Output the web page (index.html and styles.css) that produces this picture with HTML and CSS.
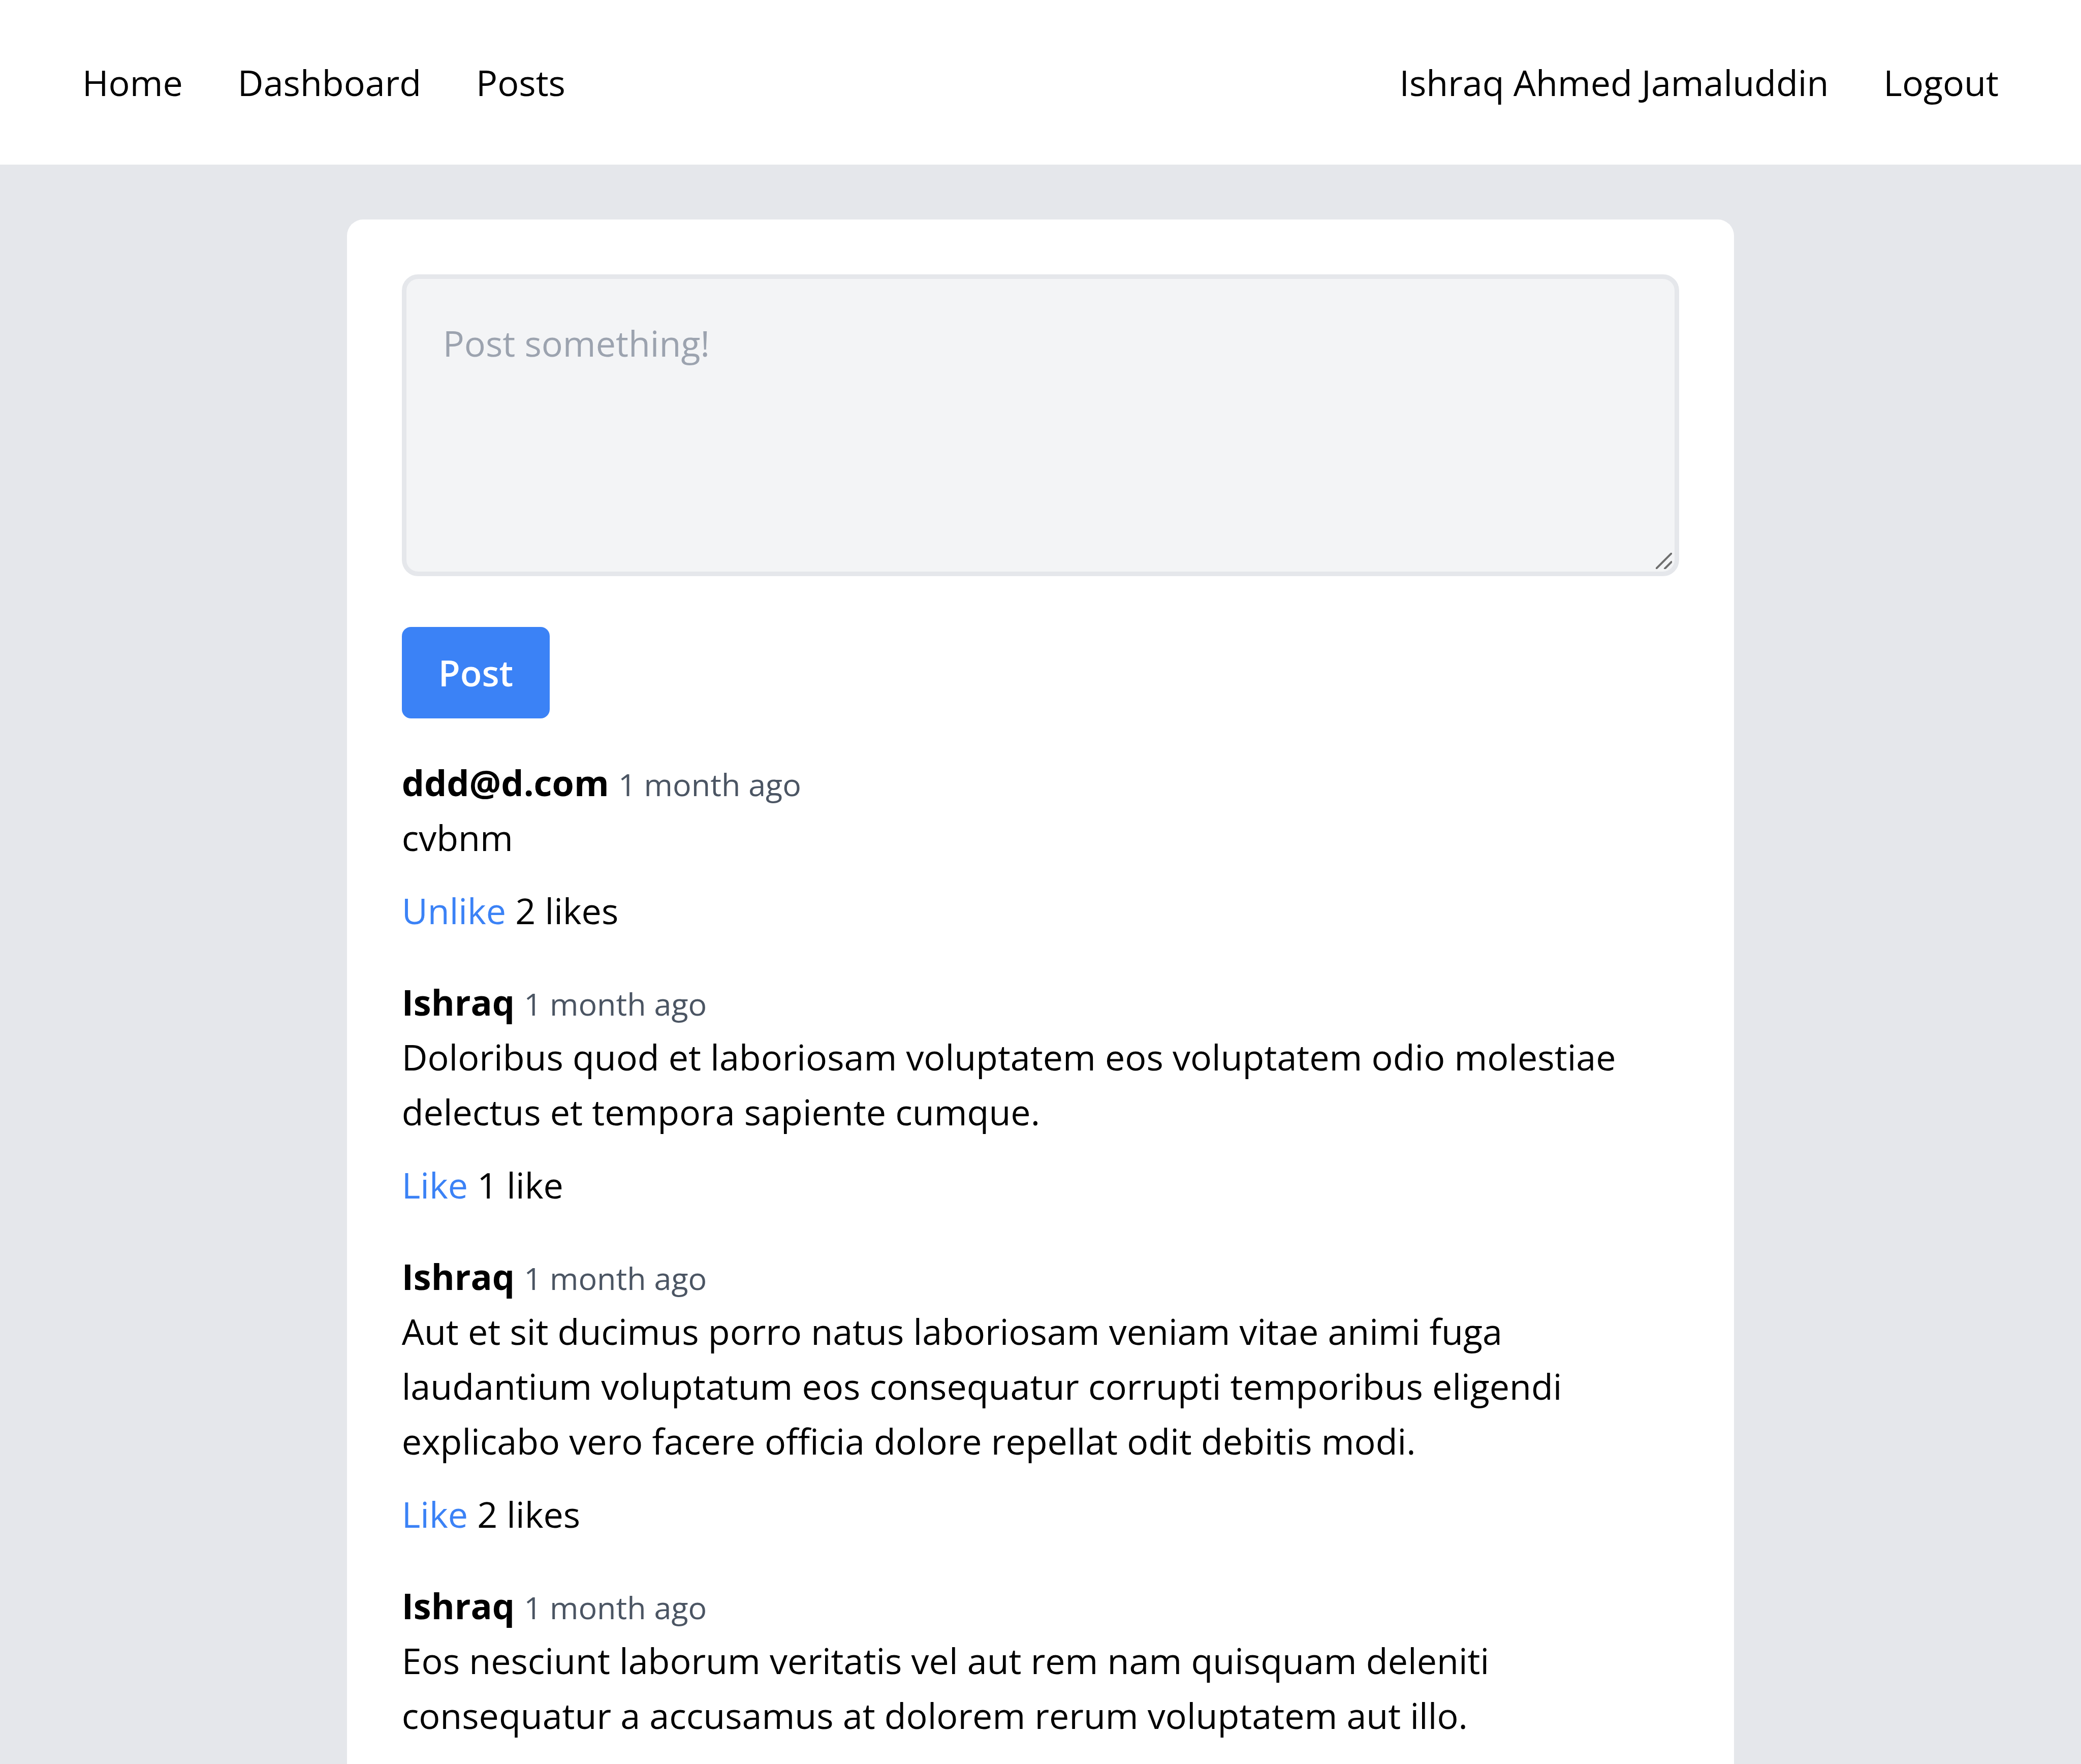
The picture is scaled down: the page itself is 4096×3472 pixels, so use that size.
FILE: index.html
```html
<!DOCTYPE html>
<html lang="en">
<head>
<meta charset="utf-8">
<title>Posts</title>
<link rel="stylesheet" href="styles.css">
</head>
<body>
<nav class="topnav">
  <ul class="nav-list">
    <li><a href="#" class="nav-link">Home</a></li>
    <li><a href="#" class="nav-link">Dashboard</a></li>
    <li><a href="#" class="nav-link">Posts</a></li>
  </ul>
  <ul class="nav-list">
    <li><a href="#" class="nav-link">Ishraq Ahmed Jamaluddin</a></li>
    <li><a href="#" class="nav-link">Logout</a></li>
  </ul>
</nav>

<main class="page">
  <section class="card">
    <form class="post-form">
      <div class="field">
        <textarea class="post-input" rows="4" placeholder="Post something!"></textarea>
        <svg class="resize-grip" viewBox="0 0 32 32" aria-hidden="true">
          <line x1="1" y1="31" x2="31" y2="1"/>
          <line x1="18" y1="31" x2="31" y2="18"/>
        </svg>
      </div>
      <button type="button" class="post-btn">Post</button>
    </form>

    <article class="post">
      <div class="post-head"><a href="#" class="post-author">ddd@d.com</a> <span class="post-time">1 month ago</span></div>
      <p class="post-body">cvbnm</p>
      <div class="post-likes"><a href="#" class="like-link">Unlike</a> <span>2 likes</span></div>
    </article>

    <article class="post">
      <div class="post-head"><a href="#" class="post-author">Ishraq</a> <span class="post-time">1 month ago</span></div>
      <p class="post-body">Doloribus quod et laboriosam voluptatem eos voluptatem odio molestiae delectus et tempora sapiente cumque.</p>
      <div class="post-likes"><a href="#" class="like-link">Like</a> <span>1 like</span></div>
    </article>

    <article class="post">
      <div class="post-head"><a href="#" class="post-author">Ishraq</a> <span class="post-time">1 month ago</span></div>
      <p class="post-body">Aut et sit ducimus porro natus laboriosam veniam vitae animi fuga laudantium voluptatum eos consequatur corrupti temporibus eligendi explicabo vero facere officia dolore repellat odit debitis modi.</p>
      <div class="post-likes"><a href="#" class="like-link">Like</a> <span>2 likes</span></div>
    </article>

    <article class="post">
      <div class="post-head"><a href="#" class="post-author">Ishraq</a> <span class="post-time">1 month ago</span></div>
      <p class="post-body">Eos nesciunt laborum veritatis vel aut rem nam quisquam deleniti consequatur a accusamus at dolorem rerum voluptatem aut illo.</p>
    </article>
  </section>
</main>
</body>
</html>
```
FILE: styles.css
```css
* {
  box-sizing: border-box;
}

html, body {
  margin: 0;
  padding: 0;
}

body {
  background: #e5e7eb;
  color: #000;
  font-family: "Open Sans", "Noto Sans", sans-serif;
  font-size: 70px;
  line-height: 108px;
}

a {
  color: inherit;
  text-decoration: none;
}

/* ---------- top navigation ---------- */
.topnav {
  display: flex;
  justify-content: space-between;
  align-items: center;
  background: #fff;
  padding: 108px;
  margin-bottom: 108px;
}

.nav-list {
  display: flex;
  align-items: center;
  list-style: none;
  margin: 0;
  padding: 0;
}

.nav-link {
  display: block;
  padding: 0 54px;
}

/* ---------- card ---------- */
.page {
  display: flex;
  justify-content: center;
}

.card {
  width: 66.6667%;
  background: #fff;
  border-radius: 32px;
  padding: 108px;
}

.post-form {
  margin-bottom: 72px;
}

.field {
  position: relative;
  margin-bottom: 100px;
}

.post-input {
  display: block;
  width: 100%;
  height: 594px;
  margin: 0;
  padding: 72px;
  border: 9px solid #e5e7eb;
  border-radius: 32px;
  background: #f3f4f6;
  font-family: inherit;
  font-size: 70px;
  line-height: 108px;
  color: #111827;
  resize: none;
  outline: none;
}

.post-input::placeholder {
  color: #9ca3af;
}

.resize-grip {
  position: absolute;
  right: 14px;
  bottom: 14px;
  width: 32px;
  height: 32px;
  stroke: #6e6e6e;
  stroke-width: 4;
  stroke-linecap: round;
}

.post-btn {
  display: block;
  margin: 0;
  padding: 36px 72px;
  border: 0;
  border-radius: 18px;
  background: #3b82f6;
  color: #fff;
  font-family: inherit;
  font-size: 70px;
  font-weight: 600;
  line-height: 108px;
  cursor: pointer;
}

/* ---------- posts ---------- */
.post {
  margin-bottom: 72px;
}

.post-head {
  height: 108px;
}

.post-author {
  font-weight: 700;
}

.post-time {
  font-size: 61px;
  line-height: 90px;
  color: #4b5563;
}

.post-body {
  margin: 0 0 36px;
}

.like-link {
  color: #3b82f6;
}
```
